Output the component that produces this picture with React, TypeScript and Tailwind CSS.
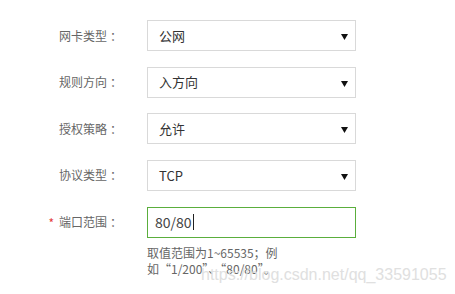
import React from "react";

const Arrow = () => (
  <svg width="7" height="6" viewBox="0 0 7 6" className="absolute right-[7px] top-[13px]">
    <polygon points="0,0 7,0 3.5,6" fill="#111" />
  </svg>
);

function Row({
  label,
  value,
  required,
  input,
}: {
  label: string;
  value: string;
  required?: boolean;
  input?: boolean;
}) {
  return (
    <div className="flex items-center h-[31px]">
      <div className="w-[19px] flex justify-end pr-[5px] text-[#e4393c] text-[12px] leading-none pt-[2px]">
        {required ? "*" : ""}
      </div>
      <div className="w-[88px] flex items-center text-[12px] text-[#666]">
        <span>{label}</span>
        <span className="ml-[3px]">：</span>
      </div>
      {input ? (
        <div
          className="relative w-[209px] h-[31px] border flex items-center pl-[7px] text-[14px] text-[#444] bg-white"
          style={{ borderColor: "#5aae3c" }}
        >
          <span>{value}</span>
          <span className="inline-block w-px h-[16px] bg-[#222] ml-[1px]" />
        </div>
      ) : (
        <div className="relative w-[209px] h-[31px] border border-[#d9d9d9] flex items-center pl-[11px] text-[13px] text-[#333] bg-white">
          {value}
          <Arrow />
        </div>
      )}
    </div>
  );
}

export default function App() {
  return (
    <div
      className="relative w-[455px] h-[294px] bg-white overflow-hidden"
      style={{ fontFamily: '"Noto Sans CJK SC", "Liberation Sans", sans-serif' }}
    >
      <div className="pt-[20px] pl-[40px] flex flex-col gap-[15.67px]">
        <Row label="网卡类型" value="公网" />
        <Row label="规则方向" value="入方向" />
        <Row label="授权策略" value="允许" />
        <Row label="协议类型" value="TCP" />
        <div className="flex flex-col">
          <Row label="端口范围" value="80/80" required input />
          <div className="ml-[107px] mt-[7px] w-[140px] text-[12px] leading-[16px] text-[#666]">
            取值范围为1~65535；例如“1/200”、“80/80”。
          </div>
        </div>
      </div>
      <div
        className="absolute left-[201px] top-[267px] text-[16px] leading-none text-[#e0e0e0]"
        style={{ fontFamily: '"Liberation Sans", sans-serif' }}
      >
        https://blog.csdn.net/qq_33591055
      </div>
    </div>
  );
}
